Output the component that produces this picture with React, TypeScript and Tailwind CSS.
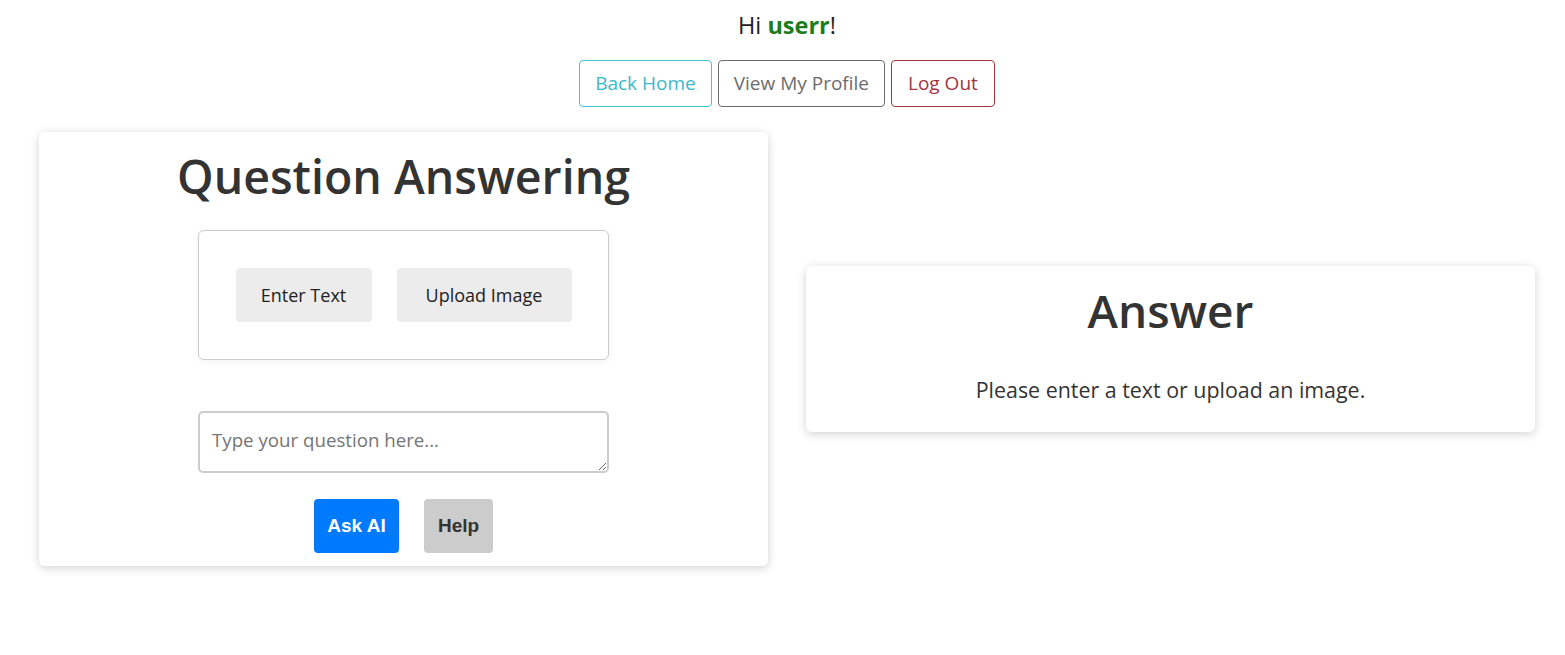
import React from "react";

export default function App() {
  const font = { fontFamily: '"Segoe UI", "Open Sans", "Noto Sans", sans-serif' };
  const arial = { fontFamily: '"Liberation Sans", Arial, sans-serif' };
  return (
    <div className="w-[1565px] h-[655px] bg-white text-[#333] overflow-hidden" style={font}>
      <div className="flex flex-col items-center pt-[9px] pl-[9px]">
        <div className="text-[23.5px] leading-[32px] text-[#222]">
          Hi <span className="font-bold text-[#1b7d1b]">userr</span>!
        </div>
        <div className="flex gap-[6px] mt-[19px]">
          <button className="h-[47px] px-[15px] border border-[#3fc3d6] rounded-[4px] text-[19px] text-[#3bb9cc]">Back Home</button>
          <button className="h-[47px] px-[15px] border border-[#6c6c6c] rounded-[4px] text-[19px] text-[#6c6c6c]">View My Profile</button>
          <button className="h-[47px] px-[16px] border border-[#a3343f] rounded-[4px] text-[19px] text-[#a3343f]">Log Out</button>
        </div>
      </div>

      <div className="flex items-center gap-[38px] pl-[39px] mt-[25px]">
        <div className="w-[729px] h-[434px] bg-white rounded-[6px] shadow-[0_2px_10px_rgba(0,0,0,0.18)] flex flex-col items-center">
          <h1 className="text-[46.5px] leading-[56px] mt-[16px] font-semibold text-[#333]">Question Answering</h1>
          <div className="mt-[26px] w-[411px] h-[130px] border border-[#ccc] rounded-[6px] flex items-center justify-center gap-[25px] shadow-[0_1px_6px_rgba(0,0,0,0.06)]">
            <button className="w-[136px] h-[54px] bg-[#ececec] rounded-[4px] text-[18px] text-[#222]">Enter Text</button>
            <button className="w-[175px] h-[54px] bg-[#ececec] rounded-[4px] text-[18px] text-[#222]">Upload Image</button>
          </div>
          <textarea
            className="mt-[51px] w-[411px] h-[62px] border-2 border-[#ccc] rounded-[5px] px-[12px] py-[14px] text-[18.7px] leading-[26px] placeholder:text-[#757575] resize-y outline-none"
            style={font}
            placeholder="Type your question here..."
          />
          <div className="flex gap-[25px] mt-[26px]">
            <button className="w-[85px] h-[54px] bg-[#007bff] rounded-[4px] text-white font-bold text-[19px]" style={arial}>Ask AI</button>
            <button className="w-[69px] h-[54px] bg-[#ccc] rounded-[4px] text-[#333] font-bold text-[19px]" style={arial}>Help</button>
          </div>
        </div>

        <div className="w-[729px] h-[166px] bg-white rounded-[6px] shadow-[0_2px_10px_rgba(0,0,0,0.18)] flex flex-col items-center">
          <h2 className="text-[46px] leading-[56px] mt-[16px] font-semibold text-[#333]">Answer</h2>
          <p className="text-[21.4px] leading-[30px] mt-[37px] text-[#333]">Please enter a text or upload an image.</p>
        </div>
      </div>
    </div>
  );
}
